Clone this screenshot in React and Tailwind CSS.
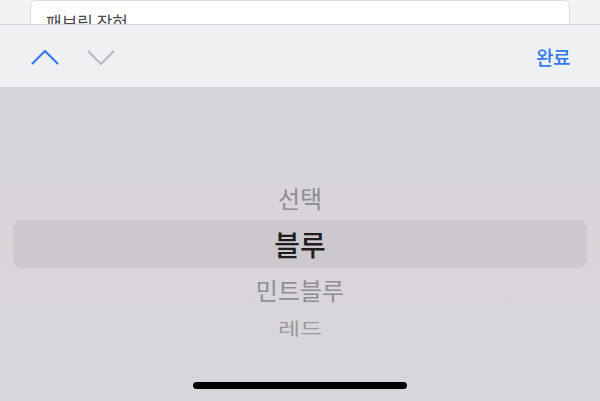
import React from "react";

const font = { fontFamily: '"Noto Sans CJK KR", "Noto Sans", sans-serif' };

export default function App() {
  return (
    <div className="w-[600px] h-[401px] overflow-hidden flex flex-col bg-[#f2f2f5]" style={font}>
      {/* top page fragment */}
      <div className="h-[24px] shrink-0 px-[30px] overflow-hidden">
        <div className="h-[40px] bg-white border border-[#dcdce0] rounded-[6px] pl-[15px] pt-[9px]">
          <span className="text-[17px] leading-[20px] text-[#4a4a4e]">패브릭 장혀</span>
        </div>
      </div>
      {/* toolbar */}
      <div className="h-[63px] shrink-0 bg-[#eff0f2] border-t border-[#d6d6da] flex items-center pl-[31px] pr-[30px]">
        <svg width="28" height="16" viewBox="0 0 28 16" className="mt-[2px]">
          <path d="M1.5 14.5 L14 2 L26.5 14.5" fill="none" stroke="#3478f6" strokeWidth="2.2" strokeLinecap="round" strokeLinejoin="round" />
        </svg>
        <svg width="28" height="16" viewBox="0 0 28 16" className="ml-[28px] mt-[4px]">
          <path d="M1.5 1.5 L14 14 L26.5 1.5" fill="none" stroke="#b8b8bc" strokeWidth="2" strokeLinecap="round" strokeLinejoin="round" />
        </svg>
        <div className="flex-1" />
        <span className="text-[19px] font-medium text-[#3478f6] leading-none tracking-[-0.5px]">완료</span>
      </div>
      {/* picker */}
      <div className="flex-1 flex flex-col bg-linear-to-b from-[#d4d6db] via-[#dad4d9] to-[#d6d8dd] pt-[89px]">
        <div className="h-[44px] flex items-center justify-center">
          <span className="text-[24px] text-[#8f8d92] leading-none">선택</span>
        </div>
        <div className="mx-[13px] h-[48px] rounded-[9px] bg-[#cdc8cd] flex items-center justify-center">
          <span className="text-[28px] text-[#1e1e20] leading-none font-medium">블루</span>
        </div>
        <div className="h-[44px] flex items-center justify-center">
          <span className="text-[24px] text-[#8f8e92] leading-none">민트블루</span>
        </div>
        <div className="h-[32px] flex items-center justify-center">
          <span className="text-[24px] text-[#9a999d] leading-none scale-y-[0.72] inline-block">레드</span>
        </div>
        <div className="mt-[38px] flex justify-center">
          <div className="w-[214px] h-[7px] rounded-full bg-black" />
        </div>
      </div>
    </div>
  );
}
